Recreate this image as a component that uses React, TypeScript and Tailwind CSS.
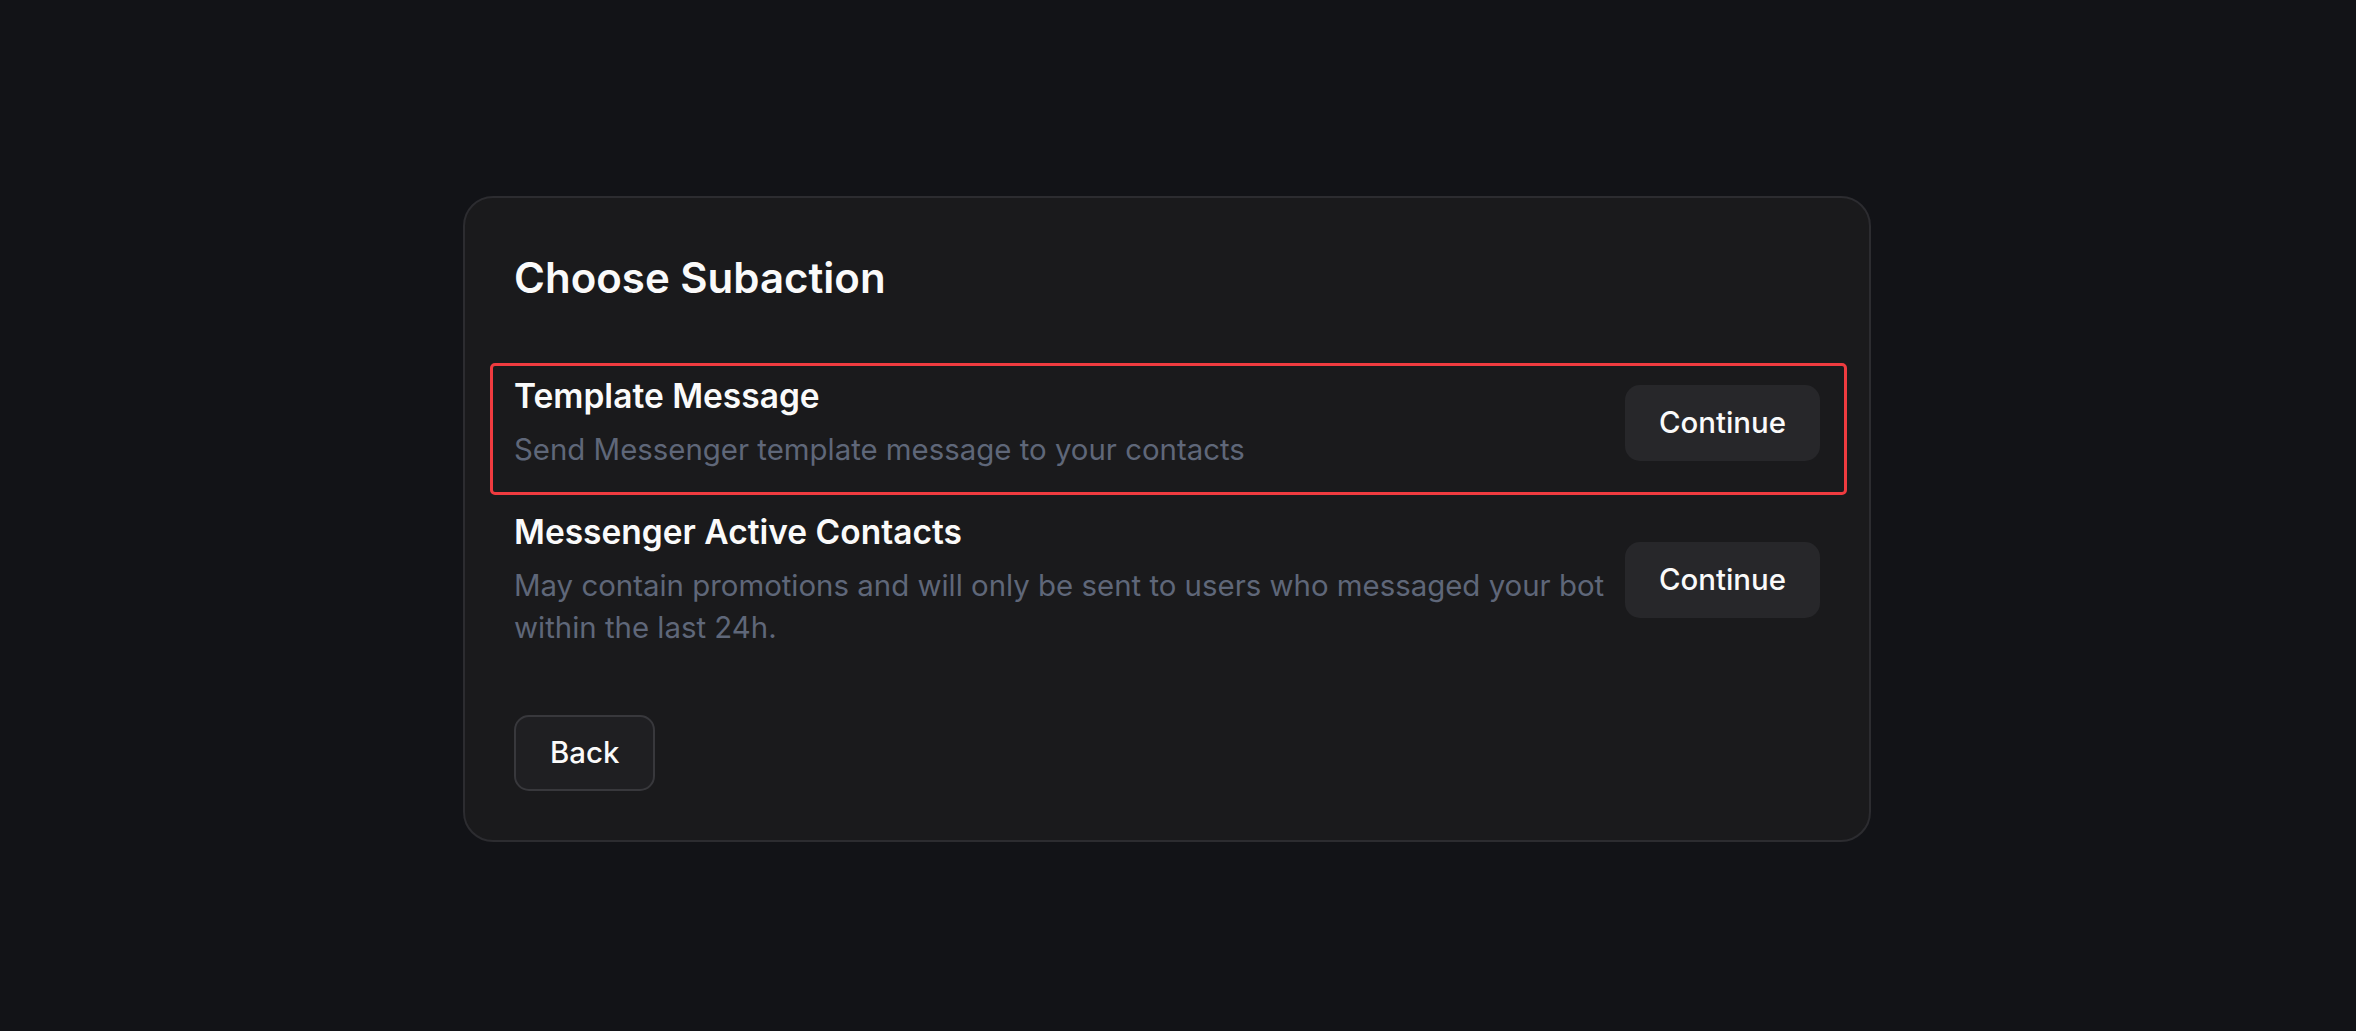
import React from "react";

type Subaction = {
  title: string;
  description: string;
  highlighted?: boolean;
};

const subactions: Subaction[] = [
  {
    title: "Template Message",
    description: "Send Messenger template message to your contacts",
    highlighted: true,
  },
  {
    title: "Messenger Active Contacts",
    description:
      "May contain promotions and will only be sent to users who messaged your bot within the last 24h.",
  },
];

function SubactionRow({ item }: { item: Subaction }) {
  return (
    <div className="relative flex items-center gap-[20px]">
      {item.highlighted && (
        <div className="pointer-events-none absolute -top-[12px] -bottom-[24px] -left-[24px] -right-[27px] rounded-[5px] border-[3px] border-[#ef3b3f]" />
      )}
      <div className="flex-1 min-w-0">
        <h3 className="text-[33.5px] leading-[42px] font-semibold text-[#fafafa]">
          {item.title}
        </h3>
        <p className="mt-[12px] text-[29.4px] leading-[42px] text-[#5f6779]">
          {item.description}
        </p>
      </div>
      <button className="h-[76px] shrink-0 rounded-[15px] bg-[#27272a] px-[34px] text-[29.4px] font-medium text-[#fafafa]">
        Continue
      </button>
    </div>
  );
}

export default function App() {
  return (
    <div
      className="min-h-screen w-full bg-[#121317] flex items-center justify-center pr-[22px] pt-[7px]"
      style={{ fontFamily: "Inter, 'Noto Sans', sans-serif" }}
    >
      <div className="w-[1408px] rounded-[30px] border-2 border-[#2c2c30] bg-[#1a1a1c] px-[49px] pt-[55px] pb-[49px]">
        <h2 className="text-[42px] leading-[50px] font-semibold text-[#fafafa]">
          Choose Subaction
        </h2>

        <div className="mt-[72px] flex flex-col gap-[40px]">
          {subactions.map((item) => (
            <SubactionRow key={item.title} item={item} />
          ))}
        </div>

        <button className="mt-[66px] h-[76px] rounded-[15px] border-2 border-[#38383c] bg-[#1f1f22] px-[34px] text-[29.4px] font-medium text-[#fafafa]">
          Back
        </button>
      </div>
    </div>
  );
}
